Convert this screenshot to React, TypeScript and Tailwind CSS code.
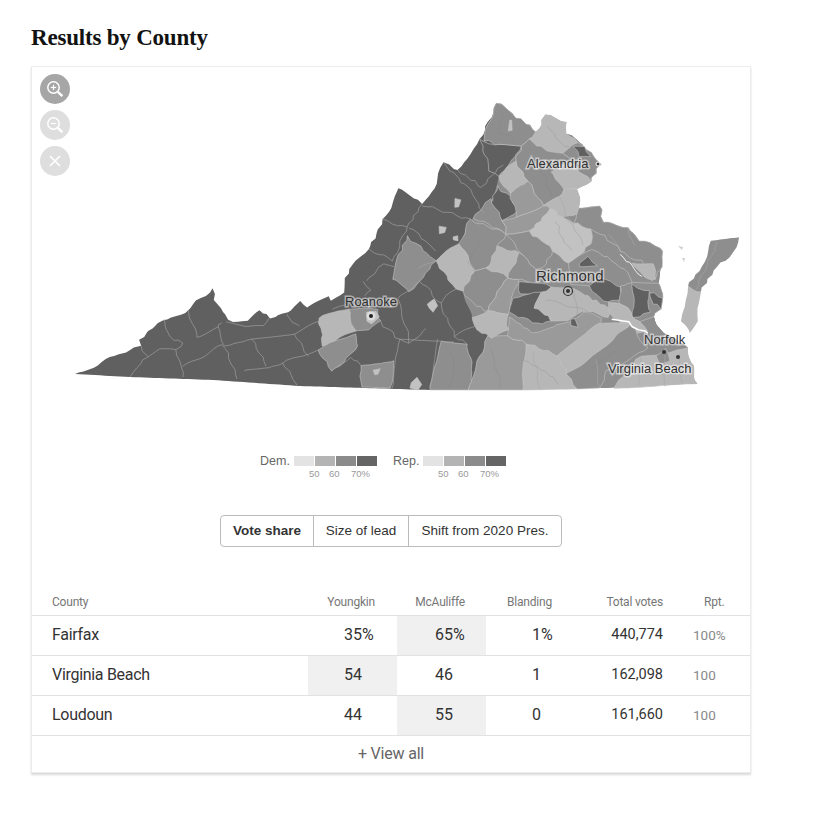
import React from "react";

const DARK = "#606060";
const MID = "#8e8e8e";
const MID2 = "#9a9a9a";
const LIGHT = "#b7b7b7";
const PALE = "#c2c2c2";

// roughen an edge using a field based on position, so shared edges stay shared
function shift(x: number, y: number) {
  const bottom = x < 430 ? 374 + ((x - 75) * 16) / 355 : 390;
  if (y > bottom - 3) return `${x},${y}`;
  const dx = 1.3 * Math.sin(x * 0.83 + y * 1.37);
  const dy = 1.3 * Math.sin(x * 1.21 - y * 0.71);
  return `${(x + dx).toFixed(1)},${(y + dy).toFixed(1)}`;
}

function roughPath(points: string, closed: boolean) {
  const pts = points.split(" ").map((p) => p.split(",").map(Number));
  const out: string[] = [];
  const n = closed ? pts.length : pts.length - 1;
  for (let i = 0; i < n; i++) {
    const a = pts[i];
    const b = pts[(i + 1) % pts.length];
    const steps = Math.max(1, Math.round(Math.hypot(b[0] - a[0], b[1] - a[1]) / 5));
    for (let s = 0; s < steps; s++) {
      out.push(shift(a[0] + ((b[0] - a[0]) * s) / steps, a[1] + ((b[1] - a[1]) * s) / steps));
    }
  }
  if (!closed) out.push(shift(pts[pts.length - 1][0], pts[pts.length - 1][1]));
  return out.join(" ");
}

// state outline, page coordinates
const outline =
  "75,374 97,365 120,353 140,347 140,340 152,327 167,318 185,312 213,288 215,300 222,312 233,322 247,320 260,310 270,318 287,313 300,302 307,307 328,297 332,302 343,293 345,277 353,263 368,250 383,220 392,207 397,187 407,193 422,203 430,197 443,163 458,170 480,140 497,102 537,132 545,115 565,122 567,133 587,148 600,165 590,180 578,190 580,207 600,205 603,222 627,227 640,240 660,247 663,257 660,282 663,303 653,317 663,333 687,347 697,385 560,389 430,390 300,386 213,380 130,377";

const eastBase =
  "483,140 497,102 537,132 545,115 565,122 567,133 587,148 600,165 590,180 578,190 580,207 600,205 603,222 627,227 640,240 660,247 663,257 660,282 663,303 653,317 663,333 687,347 697,385 560,389 468,390 478,360 488,337 472,317 462,290 460,243 473,218 490,203 498,177 500,145";

const regions: [string, string][] = [
  [DARK, "480,140 500,145 522,145 512,160 498,177 490,170"],
  [MID, "483,140 497,102 537,132 528,140 522,145 500,145"],
  [LIGHT, "545,115 565,122 567,133 577,143 563,152 547,150 528,140 537,132"],
  [MID, "563,152 577,143 587,148 600,165 590,180 583,175 573,162"],
  [DARK, "574,146 584,148 590,158 580,156"],
  [LIGHT, "550,172 573,162 583,175 590,180 578,190 563,188"],
  [MID, "528,140 547,150 563,152 573,162 550,172 563,188 560,197 543,205 528,180 515,162 522,145"],
  [LIGHT, "515,162 528,180 510,193 498,177"],
  [DARK, "498,187 510,197 517,207 515,215 503,222 490,203"],
  [MID2, "510,193 528,180 543,205 517,217"],
  [MID, "490,200 503,222 507,233 473,218"],
  [MID2, "517,217 543,205 550,208 530,232 507,233 503,222"],
  [LIGHT, "543,205 560,197 563,188 578,190 580,207 578,213 563,218 550,208"],
  [PALE, "550,208 563,218 573,222 563,240 553,250 530,232"],
  [PALE, "573,222 590,230 593,240 580,257 567,263 553,250 563,240"],
  [MID, "578,213 580,207 600,205 603,222 627,227 640,240 660,247 663,257 660,270 653,282 643,260 633,260 617,247 600,233 590,230 573,222"],
  [LIGHT, "633,262 653,265 657,280 643,277"],
  [MID, "507,233 530,232 553,250 543,267 537,270 523,257"],
  [LIGHT, "497,247 520,253 507,277 487,268"],
  [MID, "470,220 507,233 497,247 487,268 475,272 460,243"],
  [LIGHT, "460,243 475,272 462,290 455,290 435,260"],
  [MID, "523,257 537,270 535,282 517,280 507,277 520,253"],
  [MID, "475,272 487,268 507,277 497,293 488,312 472,303 462,290"],
  [MID2, "507,277 517,280 518,283 507,313 488,312 497,293"],
  [DARK, "518,283 535,282 550,287 542,293 520,295"],
  [DARK, "513,297 540,293 535,307 552,320 542,325 510,313"],
  [LIGHT, "540,293 550,287 570,287 588,297 613,310 607,317 583,310 567,322 552,320 535,307"],
  [MID, "567,263 580,257 593,250 617,263 633,280 630,297 623,298 600,277 588,287 572,285"],
  [DARK, "587,255 597,267 578,265"],
  [DARK, "588,287 600,277 620,287 623,298 607,303"],
  [MID, "620,285 633,282 660,282 663,303 653,317 640,323 620,302"],
  [DARK, "633,285 648,292 650,313 633,317"],
  [DARK, "650,292 663,298 660,308 652,303"],
  [LIGHT, "607,303 620,302 640,323 647,330 633,333 613,317"],
  [MID2, "508,317 533,332 573,322 583,312 603,317 593,330 557,355 533,353 525,343 508,337"],
  [DARK, "570,320 576,320 577,326 570,326"],
  [LIGHT, "557,355 600,323 630,325 613,340 567,375"],
  [MID, "630,325 647,347 633,357 607,370 600,388 577,389 567,375 613,340"],
  [LIGHT, "525,343 557,355 567,375 577,389 523,390"],
  [MID2, "488,337 508,337 525,343 523,390 468,390 478,360"],
  [LIGHT, "472,317 488,312 507,313 508,330 490,337 477,330"],
  [MID, "440,340 467,343 473,373 468,390 430,390"],
  [LIGHT, "319,318 348,308 355,332 323,345"],
  [MID, "317,350 357,333 358,347 332,372"],
  [MID, "348,308 377,310 380,322 370,330 355,332"],
  [MID, "360,365 395,360 390,388 362,387"],
  [MID, "408,237 435,260 420,280 410,292 393,278 397,257"],
  [LIGHT, "613,387 640,357 660,355 687,347 697,385"],
  [MID, "655,357 667,347 670,360 660,364"],
  [PALE, "412,380 417,378 423,385 418,390 410,388"],
  [PALE, "454,198 460,200 459,206 454,207"],
  [PALE, "439,227 445,227 446,233 440,233"],
  [PALE, "452,236 458,236 457,242 452,241"],
  [PALE, "428,303 435,300 439,306 433,311"],
  [PALE, "365,312 375,310 378,318 372,323 366,320"],
  [PALE, "374,369 379,368 379,375 375,376"],
  [PALE, "509,120 513,119 513,129 509,130"],
];

const lines = [
  "187,310 198,337 217,328 222,322",
  "165,320 170,337 183,343 177,350 183,377",
  "140,347 147,357 130,377",
  "147,357 158,350 177,350",
  "182,367 200,357 223,345 238,378",
  "217,328 225,345 252,338 267,365",
  "243,372 283,363 317,350",
  "252,338 295,333 308,355",
  "283,363 297,385",
  "225,323 263,327 270,317",
  "295,333 318,322",
  "287,315 300,327",
  "332,310 345,305",
  "363,280 370,290 365,297",
  "367,282 383,265 395,268",
  "368,250 393,260",
  "383,220 407,228 422,203",
  "400,340 392,388",
  "380,322 400,340 410,342 427,327",
  "332,372 350,357 360,365",
  "423,205 470,220",
  "410,227 437,252",
  "443,163 473,193 483,213",
  "458,170 482,188 502,165",
  "418,267 435,260",
  "440,303 455,290",
  "440,303 455,337",
  "438,338 430,388",
  "400,340 440,340 455,342",
  "477,325 455,337 467,343",
  "398,300 420,280",
  "420,280 440,303",
  "407,228 393,260",
  "398,300 410,342",
  "560,197 566,215 573,222",
  "610,235 620,250",
  "627,227 634,245",
  "533,353 540,389",
  "595,360 600,388",
  "640,357 640,386",
  "665,356 665,386",
  "680,352 682,385",
  "718,243 695,290",
];

// fainter river lines inside the lighter counties
const rivers = [
  "556,222 562,238 572,252",
  "565,216 576,232 584,246",
  "548,125 556,138 568,148",
  "503,115 500,132 515,140",
  "535,160 545,180 552,196",
  "480,240 468,262 480,282",
  "545,300 565,305 590,312",
  "575,292 577,318",
  "525,360 545,372 560,384",
  "490,350 498,372 500,388",
  "450,350 455,370 448,388",
  "620,345 605,360 590,372",
];

const labels = [
  { t: "Alexandria", x: 527, y: 168, s: 13 },
  { t: "Richmond", x: 536, y: 281, s: 15 },
  { t: "Roanoke", x: 345, y: 306, s: 13 },
  { t: "Norfolk", x: 644, y: 344, s: 13 },
  { t: "Virginia Beach", x: 608, y: 373, s: 13 },
];

function ZoomIcon({ plus }: { plus?: boolean }) {
  return (
    <svg width="30" height="30" viewBox="0 0 30 30" fill="none" stroke="#fff">
      <circle cx="13.5" cy="13.5" r="5.7" strokeWidth="1.5" />
      <path d="M10.8 13.5h5.4" strokeWidth="1.2" />
      {plus && <path d="M13.5 10.8v5.4" strokeWidth="1.2" />}
      <path d="M17.8 17.8l4.6 4.4" strokeWidth="2.4" />
    </svg>
  );
}

function Legend({ name, labelWidth }: { name: string; labelWidth: string }) {
  return (
    <div className="flex gap-[3px]">
      <div className={`${labelWidth} text-[12.5px] leading-[10px] text-[#666]`}>{name}</div>
      <div className="w-[84px]">
        <div className="flex gap-px">
          <div className="h-[10px] w-5 bg-[#e3e3e3]"></div>
          <div className="h-[10px] w-5 bg-[#b4b4b4]"></div>
          <div className="h-[10px] w-5 bg-[#8b8b8b]"></div>
          <div className="h-[10px] w-5 bg-[#656565]"></div>
        </div>
        <div className="mt-[2px] flex pl-[15px] text-[9.5px] leading-[11px] text-[#999]">
          <span className="w-5">50</span>
          <span className="w-[22px]">60</span>
          <span>70%</span>
        </div>
      </div>
    </div>
  );
}

const rows = [
  { name: "Fairfax", y: "35%", m: "65%", b: "1%", total: "440,774", rpt: "100%", lead: "m" },
  { name: "Virginia Beach", y: "54", m: "46", b: "1", total: "162,098", rpt: "100", lead: "y" },
  { name: "Loudoun", y: "44", m: "55", b: "0", total: "161,660", rpt: "100", lead: "m" },
];

export default function App() {
  return (
    <main className="min-h-[818px] bg-white pl-[31px] pt-[23px] font-['Liberation_Sans',sans-serif]">
      <h2 className="mb-[13px] h-[30px] font-['Liberation_Serif',serif] text-[23px] font-bold leading-[30px] tracking-[-0.2px] text-[#121212]">
        Results by County
      </h2>

      <div className="w-[720px] border border-[#ececec] shadow-[0_2px_2px_rgba(0,0,0,0.15)]">
        <div className="relative h-[389px]">
          <svg width="718" height="389" viewBox="32 67 718 389" className="block">
            <polygon points={roughPath(outline, true)} fill={DARK} />
            <polygon points={roughPath(eastBase, true)} fill={MID} />
            <polygon points={roughPath("740,238 712,242 702,267 687,287 700,293 720,263 733,253", true)} fill={MID} />
            <polygon points={roughPath("687,287 700,293 698,320 690,332 682,320", true)} fill={LIGHT} />
            <polygon points="678,246 683,247 682,250" fill="#cfcfcf" />
            <polygon points="682,258 685,258 684,262" fill="#cfcfcf" />
            {regions.map(([f, p], i) => (
              <polygon key={i} points={roughPath(p, true)} fill={f} stroke="#c4c4c4" strokeWidth="0.6" strokeLinejoin="round" />
            ))}
            {lines.map((p, i) => (
              <polyline key={i} points={roughPath(p, false)} fill="none" stroke="#a8a8a8" strokeWidth="0.6" />
            ))}
            {rivers.map((p, i) => (
              <polyline key={i} points={roughPath(p, false)} fill="none" stroke="#7f7f7f" strokeOpacity="0.45" strokeWidth="0.6" />
            ))}
            <polyline points={roughPath("620,255 630,263 642,276", false)} fill="none" stroke="#eee" strokeWidth="1" />
            <polyline points={roughPath("613,320 630,323 640,331 648,332", false)} fill="none" stroke="#fff" strokeWidth="1.5" />
            <circle cx="598" cy="164" r="2" fill="#333" stroke="#fff" strokeWidth="1" />
            <circle cx="568" cy="291" r="4.5" fill="none" stroke="#333" strokeWidth="1.2" />
            <circle cx="568" cy="291" r="2" fill="#333" />
            <circle cx="371" cy="316" r="4.5" fill="#ddd" />
            <circle cx="371" cy="316" r="2" fill="#222" />
            <circle cx="664" cy="352" r="2" fill="#333" />
            <circle cx="678" cy="357" r="2" fill="#333" />
            {labels.map((l) => (
              <text
                key={l.t}
                x={l.x}
                y={l.y}
                fontSize={l.s}
                className="fill-[#333] stroke-white/50 font-['Liberation_Sans',sans-serif] [paint-order:stroke] [stroke-width:3px]"
              >
                {l.t}
              </text>
            ))}
          </svg>

          <div className="absolute left-2 top-[7px] flex flex-col gap-[6px]">
            <div className="size-[30px] rounded-full bg-[#a6a6a6]">
              <ZoomIcon plus />
            </div>
            <div className="size-[30px] rounded-full bg-[#dedede]">
              <ZoomIcon />
            </div>
            <div className="size-[30px] rounded-full bg-[#dedede]">
              <svg width="30" height="30" viewBox="0 0 30 30" stroke="#fff" strokeWidth="1.6">
                <path d="M10 10l10 10M20 10L10 20" />
              </svg>
            </div>
          </div>
        </div>

        <div className="flex gap-[15px] pl-[228px]">
          <Legend name="Dem." labelWidth="w-[31px]" />
          <Legend name="Rep." labelWidth="w-[27px]" />
        </div>

        <div className="mt-[36px] flex justify-center">
          <div className="flex h-[32px] overflow-hidden rounded-[4px] border border-[#bbb] text-[13.5px] leading-[30px] text-[#333]">
            <div className="w-[92px] text-center font-bold">Vote share</div>
            <div className="w-[95px] border-l border-[#bbb] text-center">Size of lead</div>
            <div className="w-[153px] border-l border-[#bbb] text-center">Shift from 2020 Pres.</div>
          </div>
        </div>

        <div className="mt-[45px] grid h-[24px] grid-cols-[276px_89px_89px_90px_87px_87px] border-b border-[#e2e2e2] font-['Roboto',sans-serif] text-[12px] leading-[20px] tracking-[-0.2px] text-[#777]">
          <div className="pl-[20px]">County</div>
          <div className="pr-[22px] text-right">Youngkin</div>
          <div className="pr-[21px] text-right">McAuliffe</div>
          <div className="pr-[24px] text-right">Blanding</div>
          <div className="text-right">Total votes</div>
          <div className="pl-[41px]">Rpt.</div>
        </div>

        {rows.map((r) => (
          <div
            key={r.name}
            className="grid h-[40px] grid-cols-[276px_89px_89px_90px_87px_87px] border-b border-[#e2e2e2] font-['Roboto',sans-serif] text-[16px] leading-[37px] text-[#333]"
          >
            <div className="pl-[20px] tracking-[-0.3px]">{r.name}</div>
            <div className={r.lead === "y" ? "bg-[#f0f0f0] pl-[36px]" : "pl-[36px]"}>{r.y}</div>
            <div className={r.lead === "m" ? "bg-[#f0f0f0] pl-[38px]" : "pl-[38px]"}>{r.m}</div>
            <div className="pl-[46px]">{r.b}</div>
            <div className="text-right text-[14.5px] leading-[38px]">{r.total}</div>
            <div className="pl-[30px] text-[13.5px] leading-[38px] text-[#888]">{r.rpt}</div>
          </div>
        ))}

        <div className="h-[36px] text-center font-['Roboto',sans-serif] text-[16px] leading-[35px] tracking-[-0.2px] text-[#666]">+ View all</div>
      </div>
    </main>
  );
}
